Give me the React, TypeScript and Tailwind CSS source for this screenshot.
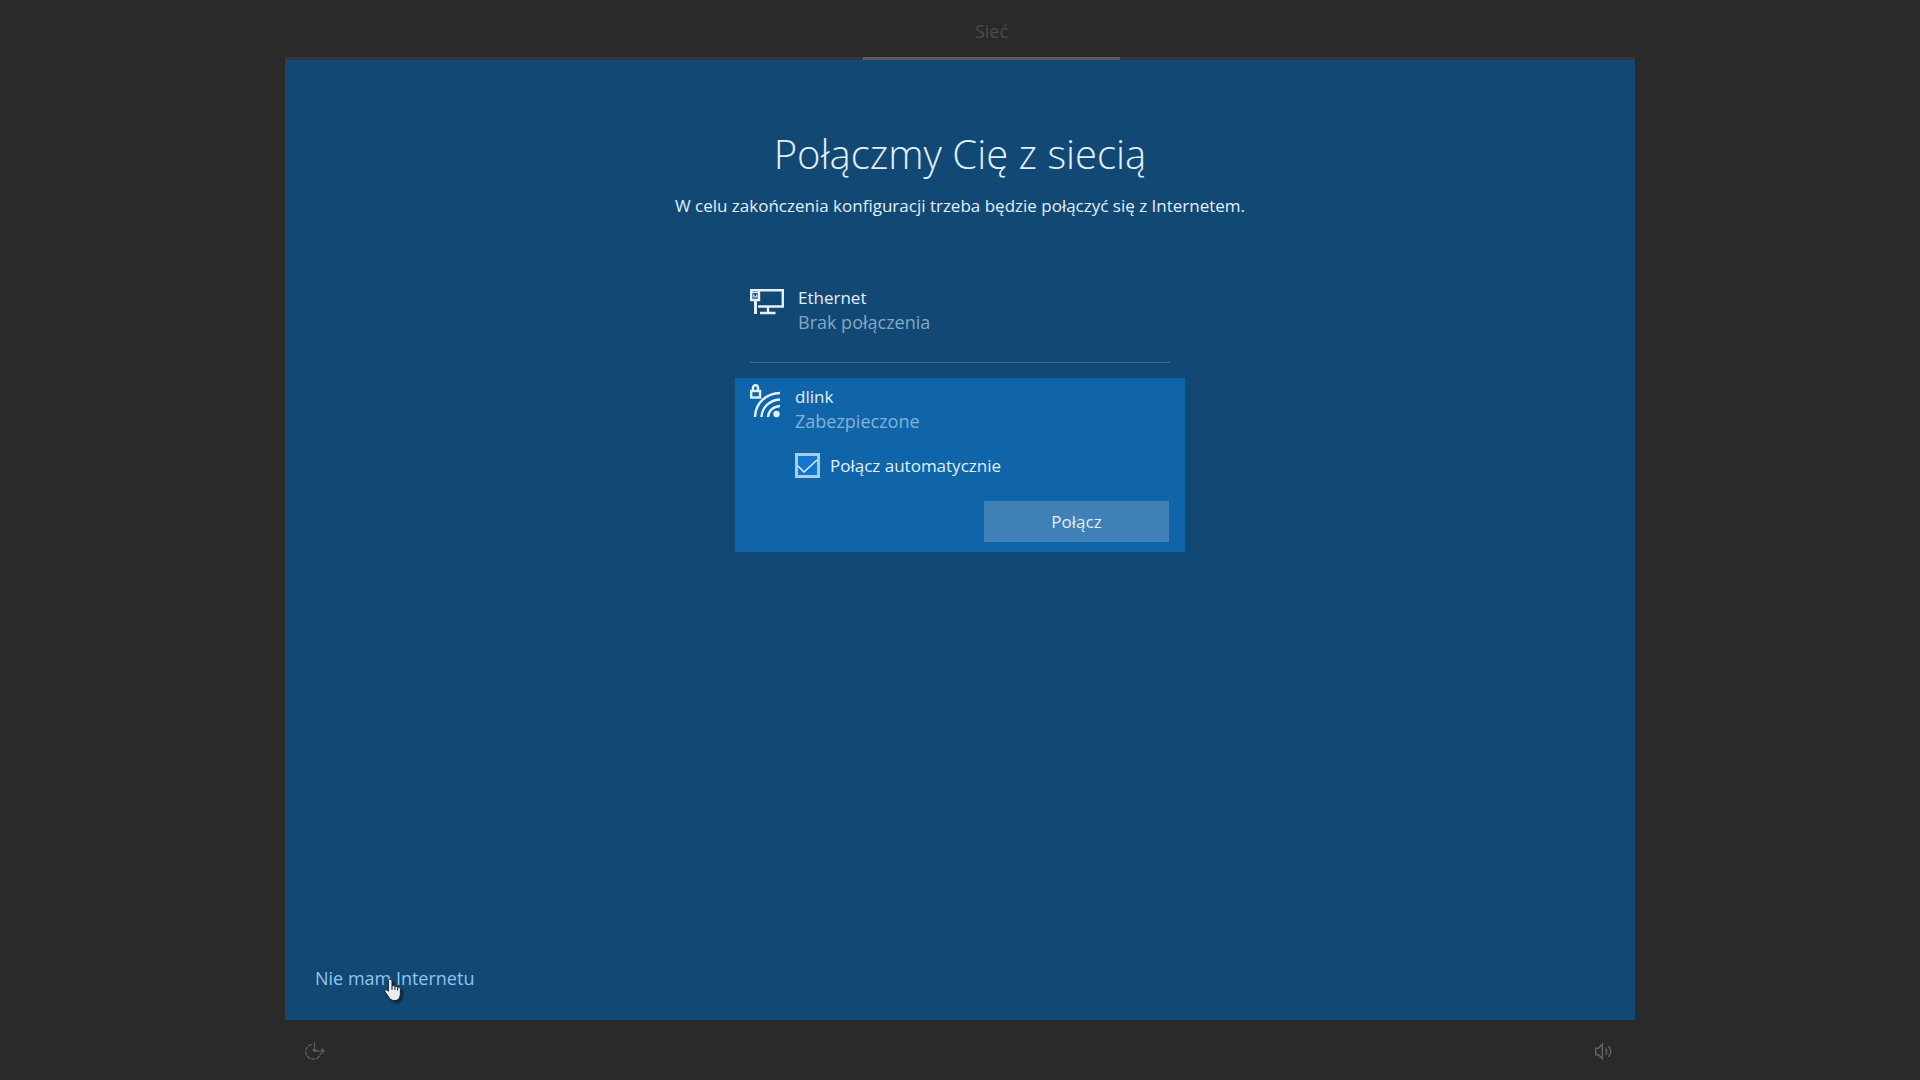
import React, { useState } from 'react';

function EthernetIcon() {
  return (
    <svg className="w-[34px] h-[26px] shrink-0" viewBox="0 0 34 26" fill="none" stroke="#e3effa" strokeWidth="2.400" aria-hidden="true">
      <path d="M0 1.200H32.800V17.500H8" />
      <path d="M1.200 0V11H9V1" />
      <path d="M1 3.500H9" strokeWidth="1.200" />
      <path d="M3.800 5.500V8H6.800V5.500" strokeWidth="1.200" />
      <path d="M5.500 11V25" strokeWidth="3" />
      <path d="M18 17V24M10 24H25.500" />
    </svg>
  );
}

function SecureWifiIcon() {
  return (
    <svg className="w-[30px] h-[34px] shrink-0" viewBox="0 0 30 34" fill="none" stroke="#e3effa" strokeWidth="2.400" aria-hidden="true">
      <rect x="1.200" y="7" width="8.800" height="6.500" />
      <path d="M3 7V3.500a2.500 2.300 0 0 1 5 0V7" />
      <path d="M30 9C16 9.500 5.500 19 5 33M30 15.500C20 16 12 23 11.500 33M30 22C23 22.500 18.500 27 18 33" />
      <circle cx="26.500" cy="30" r="3.200" fill="#e3effa" stroke="none" />
    </svg>
  );
}

function EaseOfAccessIcon() {
  return (
    <svg className="w-5 h-[18px]" viewBox="0 0 20 18" fill="none" stroke="#626262" aria-hidden="true">
      <path d="M7 2.300A7.500 7.500 0 1 0 15.500 11.500" strokeWidth="1.300" strokeDasharray="4 1" />
      <path d="M9.500 0V9H19M16.500 6.500L19 9L16.500 11.500M7.500 7.500L9.500 9.500L11.500 7.500" strokeWidth="1.200" />
    </svg>
  );
}

function VolumeIcon() {
  return (
    <svg className="w-[18px] h-[17px]" viewBox="0 0 18 17" fill="none" stroke="#626262" strokeWidth="1.400" aria-hidden="true">
      <path d="M.7 5.200H3.500L7.300 1.200V15.800L3.500 11.800H.7Z" />
      <path d="M10.500 5.500Q12.800 8.500 10.500 11.500M13.500 3Q18 8.500 13.500 14" />
    </svg>
  );
}

function HandCursor() {
  return (
    <svg className="absolute left-[68px] top-3 w-5 h-6 pointer-events-none drop-shadow-[2px_2px_1px_rgba(0,0,0,0.5)]" viewBox="0 0 20 24" aria-hidden="true">
      <path
        d="M7.200 1.200C8.300 1.200 9 2 9 3V8C10 7.300 11.400 7.600 11.900 8.500C12.900 8 14.100 8.400 14.500 9.300C15.900 8.700 17.400 9.500 17.400 11V15C17.400 19.500 15.400 22.600 11.800 22.600C8.400 22.600 6.700 21 5.400 18.600L2 13.800C1.200 12.300 3 11.200 4.200 12.100L5.400 13.300V3C5.400 2 6.100 1.200 7.200 1.200Z"
        fill="#ececec"
        stroke="#123"
        strokeWidth="1"
      />
      <path d="M9 8V12M11.900 8.600V12M14.600 9.500V12.500" stroke="#123" strokeWidth="1" />
    </svg>
  );
}

export default function App() {
  const [autoConnect, setAutoConnect] = useState(true);

  return (
    <div className="min-h-screen flex flex-col bg-[#2a2a2a] font-['Open_Sans',sans-serif] text-[17px] leading-6 text-[#e3effa]">
      {/* Setup steps */}
      <header className="w-[70.3125%] mx-auto h-[60px] shrink-0 flex border-b-[3px] border-[#33373c]">
        <div className="w-[257px] ml-[578px] -mb-[3px] pt-[19px] text-center text-lg leading-6 text-[#4b4b4b] border-b-[3px] border-[#5b5d60]">
          Sieć
        </div>
      </header>

      <main className="w-[70.3125%] mx-auto flex-1 flex flex-col bg-[#124974]">
        <div className="flex-1 flex flex-col items-center pt-16">
          <h1 className="text-[40px] leading-[60px] font-light">Połączmy Cię z siecią</h1>
          <p className="mt-[10px]">W celu zakończenia konfiguracji trzeba będzie połączyć się z Internetem.</p>

          {/* Network list */}
          <ul className="w-[450px] mt-[68px]">
            <li className="mx-[15px] h-[77px] flex gap-[14px] border-b border-[#3a6790]">
              <span className="pt-[3px]"><EthernetIcon /></span>
              <div>
                <p>Ethernet</p>
                <p className="text-lg leading-6 text-[#84a7c6]">Brak połączenia</p>
              </div>
            </li>
            <li className="mt-[15px] px-[15px] pt-[6px] pb-[10px] bg-[#1065a9]">
              <div className="flex gap-[15px]">
                <SecureWifiIcon />
                <div className="pt-px">
                  <p>dlink</p>
                  <p className="text-lg leading-6 text-[#83b2da]">Zabezpieczone</p>
                </div>
              </div>
              <label className="mt-5 ml-[45px] flex items-center gap-[10px]">
                <span className="relative w-[25px] h-[25px] shrink-0">
                  <input
                    type="checkbox"
                    checked={autoConnect}
                    onChange={(e) => setAutoConnect(e.target.checked)}
                    className="block w-full h-full appearance-none border-[3px] border-[#a9ccea] bg-[#1477cf]"
                  />
                  {autoConnect && (
                    <svg className="absolute inset-0 pointer-events-none" viewBox="0 0 25 25" fill="none" stroke="#e3effa" strokeWidth="1.500" aria-hidden="true">
                      <path d="M3 13L9 19L22 7" />
                    </svg>
                  )}
                </span>
                Połącz automatycznie
              </label>
              <div className="mt-[23px] flex justify-end">
                <button type="button" className="w-[185px] h-[41px] mr-px bg-[#3f80b6]">Połącz</button>
              </div>
            </li>
          </ul>
        </div>

        <div className="px-[30px] pb-[30px] flex">
          <a href="#offline" className="relative text-lg leading-6 text-[#8fc4f0]">
            Nie mam Internetu
            <HandCursor />
          </a>
        </div>
      </main>

      <footer className="w-[70.3125%] mx-auto h-[60px] shrink-0 pt-[2px] pl-5 pr-[22px] flex items-center justify-between">
        <button type="button" aria-label="Ułatwienia dostępu"><EaseOfAccessIcon /></button>
        <button type="button" aria-label="Głośność"><VolumeIcon /></button>
      </footer>
    </div>
  );
}
